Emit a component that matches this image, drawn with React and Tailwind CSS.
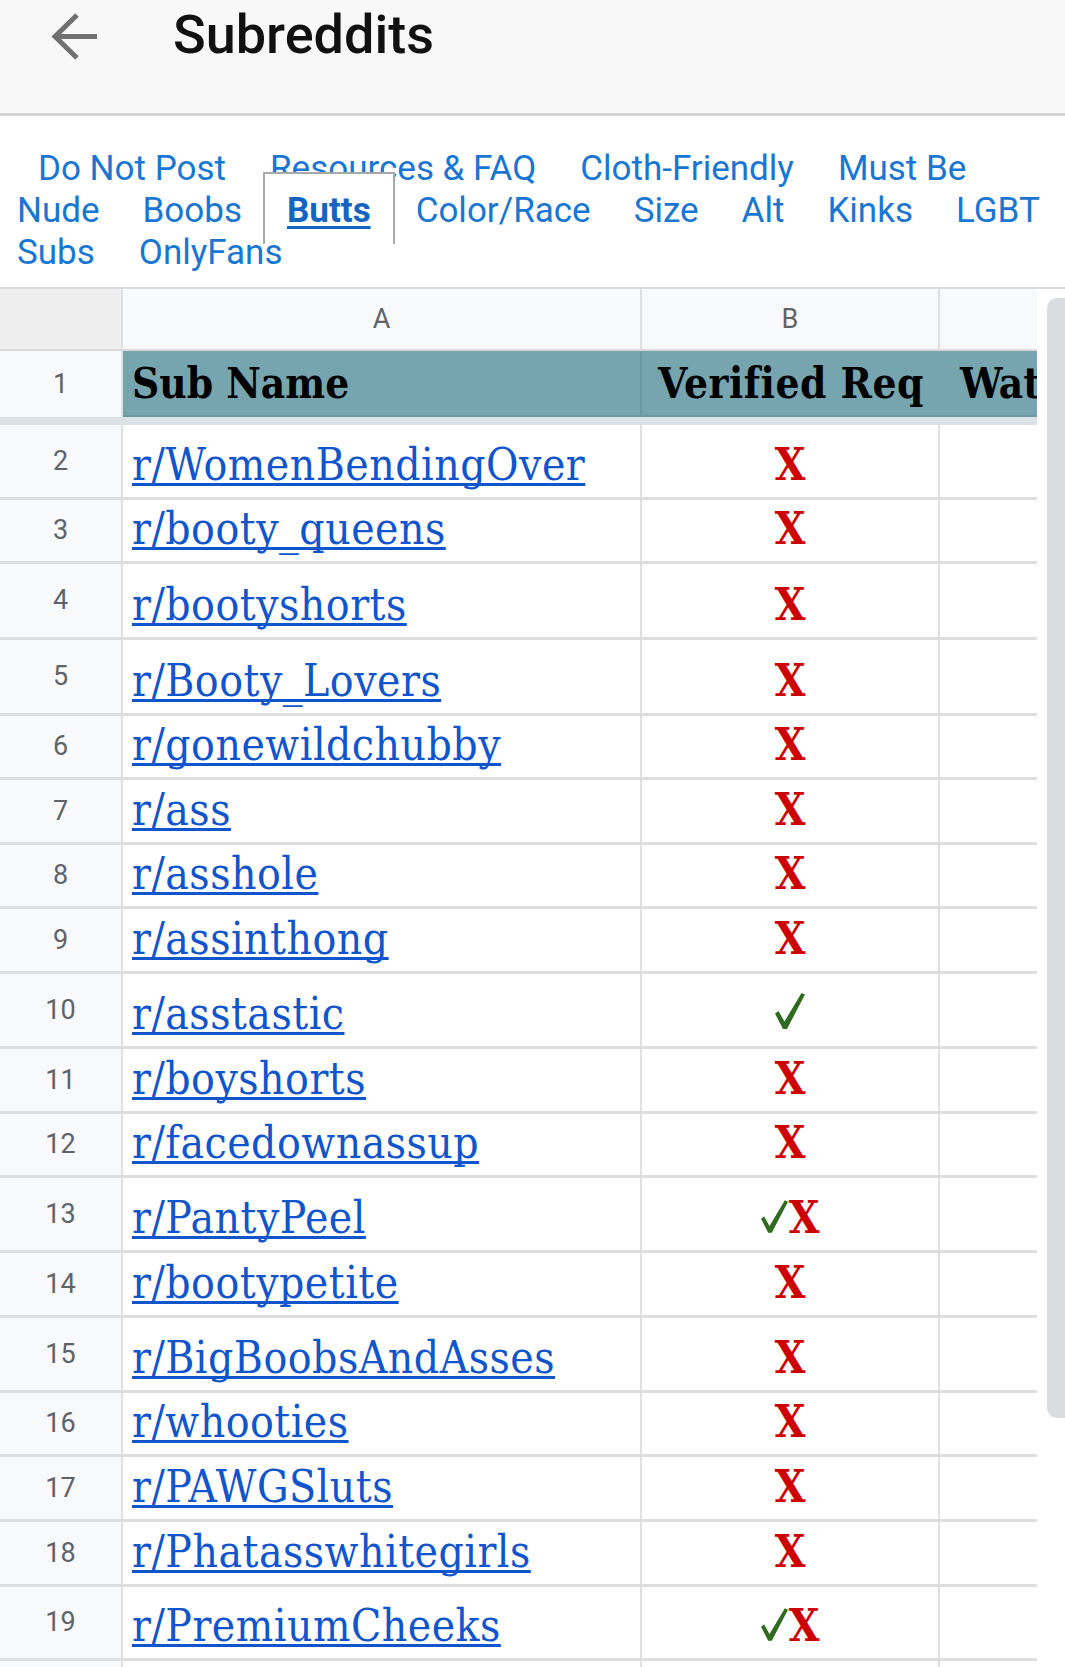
import React from "react";

const tabRows = [
  { pad: "pl-[38px] gap-[44px]", items: ["Do Not Post", "Resources & FAQ", "Cloth-Friendly", "Must Be"] },
  { pad: "pl-[17px] gap-[43px]", items: ["Nude", "Boobs", "*Butts", "Color/Race", "Size", "Alt", "Kinks", "LGBT"] },
  { pad: "pl-[17px] gap-[44px] relative", items: ["Subs", "OnlyFans"] },
];

// v: x = red X, c = check, cx = check + X
const subs = [
  { n: 2, name: "r/WomenBendingOver", v: "x", h: "h-[75px]" },
  { n: 3, name: "r/booty_queens", v: "x", h: "h-[64px]" },
  { n: 4, name: "r/bootyshorts", v: "x", h: "h-[76px]" },
  { n: 5, name: "r/Booty_Lovers", v: "x", h: "h-[76px]" },
  { n: 6, name: "r/gonewildchubby", v: "x", h: "h-[64px]" },
  { n: 7, name: "r/ass", v: "x", h: "h-[65px]" },
  { n: 8, name: "r/asshole", v: "x", h: "h-[64px]" },
  { n: 9, name: "r/assinthong", v: "x", h: "h-[65px]" },
  { n: 10, name: "r/asstastic", v: "c", h: "h-[75px]" },
  { n: 11, name: "r/boyshorts", v: "x", h: "h-[65px]" },
  { n: 12, name: "r/facedownassup", v: "x", h: "h-[64px]" },
  { n: 13, name: "r/PantyPeel", v: "cx", h: "h-[75px]" },
  { n: 14, name: "r/bootypetite", v: "x", h: "h-[65px]" },
  { n: 15, name: "r/BigBoobsAndAsses", v: "x", h: "h-[75px]" },
  { n: 16, name: "r/whooties", v: "x", h: "h-[64px]" },
  { n: 17, name: "r/PAWGSluts", v: "x", h: "h-[65px]" },
  { n: 18, name: "r/Phatasswhitegirls", v: "x", h: "h-[65px]" },
  { n: 19, name: "r/PremiumCheeks", v: "cx", h: "h-[74px]" },
  { n: 20, name: "", v: "", h: "h-[75px]", blank: true },
];

const serif = "font-['DejaVu_Serif_Condensed','DejaVu_Serif',serif]";
const roboto = "font-['Roboto',sans-serif]";

const Check = ({ className }) => (
  <svg viewBox="0 0 30 36" className={className} fill="#2f6b1e">
    <path d="M0 20.5 L3.5 18 L9.5 28.5 L26.5 0 L30 1.5 L12 36 L8 36 Z" />
  </svg>
);

const RedX = () => <span className="font-bold text-[#cc0000]">X</span>;

const Verified = ({ v }) => {
  if (v === "x") return <RedX />;
  if (v === "c") return <Check className="w-[30px] h-[36px] mb-[7px]" />;
  if (v === "cx")
    return (
      <div className="flex items-end">
        <Check className="w-[27px] h-[33px] mb-[7px] mr-[1px]" />
        <RedX />
      </div>
    );
  return null;
};

const Tab = ({ label }) => {
  if (label.startsWith("*")) {
    return (
      <span className="relative mx-[2px]">
        <span className="absolute -left-[24px] -right-[24px] -top-[18px] -bottom-[12px] border-2 border-b-0 border-[#a8a8a8] bg-white" />
        <span className="relative font-bold text-[#1565c0] underline decoration-[3px] underline-offset-[4px]">
          {label.slice(1)}
        </span>
      </span>
    );
  }
  return <span className="whitespace-nowrap">{label}</span>;
};

export default function App() {
  return (
    <div className={`w-[1065px] h-[1667px] overflow-hidden bg-white ${roboto}`}>
      {/* top bar */}
      <div className="h-[116px] bg-[#f8f8f8] border-b-[3px] border-[#d2d2d2] flex items-start">
        <svg
          className="ml-[50px] mt-[12px] w-[50px] h-[50px]"
          viewBox="0 0 50 50"
          fill="none"
          stroke="#707070"
          strokeWidth="5"
        >
          <path d="M27 3 L5 24.5 L27 46 M5 24.5 H47" />
        </svg>
        <h1 className="ml-[73px] mt-[8px] text-[54px] leading-none font-medium text-[#111111]">
          Subreddits
        </h1>
      </div>

      {/* sheet tabs */}
      <div className="h-[173px] pt-[32px] border-b-2 border-[#dadce0] text-[35px] leading-[42px] text-[#1976d2]">
        {tabRows.map((row, i) => (
          <div key={i} className={`flex h-[42px] ${row.pad}`}>
            {row.items.map((t) => (
              <Tab key={t} label={t} />
            ))}
          </div>
        ))}
      </div>

      {/* grid */}
      <div className="relative">
        <div className="w-[1037px] overflow-hidden">
          {/* column letters */}
          <div className="flex h-[62px] border-b-2 border-[#d9d9d9] text-[27px] text-[#5f6368]">
            <div className="w-[123px] shrink-0 bg-[#eeeeee] border-r-2 border-[#e0e0e0]" />
            <div className="w-[519px] shrink-0 bg-[#f8f9fa] border-r-2 border-[#e0e0e0] flex items-center justify-center">A</div>
            <div className="w-[298px] shrink-0 bg-[#f8f9fa] border-r-2 border-[#e0e0e0] flex items-center justify-center">B</div>
            <div className="w-[97px] shrink-0 bg-[#f8f9fa]" />
          </div>

          {/* header row */}
          <div className="flex h-[66px]">
            <div className="w-[123px] shrink-0 bg-[#f8f9fa] border-r-2 border-[#e0e0e0] flex items-center justify-center text-[27px] text-[#5f6368]">
              1
            </div>
            <div className={`flex shrink-0 border-b-2 border-[#6b98a1] bg-[#76a5af] text-[42px] leading-none font-bold text-black ${serif}`}>
              <div className="w-[519px] border-r-2 border-[#6b98a1] flex items-end pl-[9px] pb-[10px]">Sub Name</div>
              <div className="w-[298px] flex items-end justify-center pb-[10px] whitespace-nowrap tracking-[0.5px]">Verified Req</div>
              <div className="w-[97px] flex items-end pl-[20px] pb-[10px] whitespace-nowrap overflow-hidden">Wat</div>
            </div>
          </div>
          <div className="h-[8px] bg-[#dde2e9]" />

          {/* data rows */}
          {subs.map((s) => (
            <div key={s.n} className={`flex ${s.h} border-b-[3px] border-[#dedede]`}>
              <div className="w-[123px] shrink-0 bg-[#f8f9fa] border-r-2 border-[#e0e0e0] flex items-center justify-center text-[27px] text-[#5f6368]">
                {s.blank ? null : s.n}
              </div>
              <div className={`w-[519px] shrink-0 border-r-2 border-[#e0e0e0] flex items-end pl-[9px] pb-[10px] text-[44px] leading-none ${serif}`}>
                {s.name && (
                  <a
                    href="#"
                    className="text-[#1155cc] tracking-[0.5px] underline decoration-[3px] underline-offset-[3px] [text-decoration-skip-ink:none] whitespace-nowrap"
                  >
                    {s.name}
                  </a>
                )}
              </div>
              <div className={`w-[298px] shrink-0 border-r-2 border-[#e0e0e0] flex items-end justify-center pb-[10px] text-[44px] leading-none ${serif}`}>
                <Verified v={s.v} />
              </div>
              <div className="w-[97px] shrink-0" />
            </div>
          ))}
        </div>

        {/* scrollbar thumb */}
        <div className="absolute right-0 top-[9px] w-[18px] h-[1120px] rounded-l-[10px] bg-[#dadce0]" />
      </div>
    </div>
  );
}
